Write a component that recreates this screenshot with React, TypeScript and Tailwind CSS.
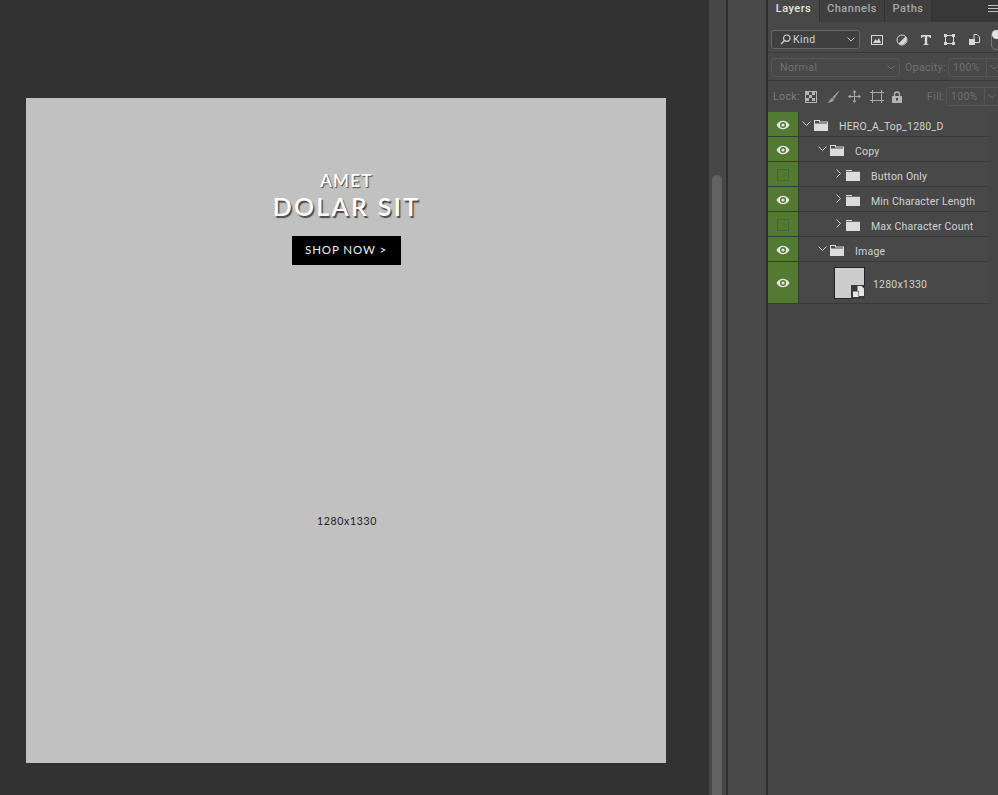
import React from "react";

const Eye = () => (
  <svg width="14" height="10" viewBox="0 0 14 10" className="block">
    <path d="M0.5 5C2.2 2 4.4 0.8 7 0.8S11.8 2 13.5 5C11.8 8 9.6 9.2 7 9.2S2.2 8 0.5 5Z" fill="#e6e6e6" />
    <circle cx="7" cy="5" r="3" fill="#527a33" />
    <circle cx="7" cy="5" r="1.6" fill="#e6e6e6" />
  </svg>
);

const Folder = ({ open }: { open: boolean }) => (
  <svg width="14" height="11" viewBox="0 0 14 11" className="block shrink-0 translate-y-[1px]">
    {open ? (
      <path d="M0 0H6V1.5H14V11H0ZM1 1V3.5H13V2.5H5V1Z" fill="#dcdcdc" fillRule="evenodd" />
    ) : (
      <path d="M0 0H6V1H0ZM0 1.8H14V11H0Z" fill="#dcdcdc" />
    )}
  </svg>
);

const Chevron = ({ open }: { open: boolean }) => (
  <svg width="9" height="9" viewBox="0 0 9 9" className="block shrink-0 -translate-y-[1px]">
    <path d={open ? "M0.5 2.5L4.5 6.5L8.5 2.5" : "M2.5 0.5L6.5 4.5L2.5 8.5"} stroke="#d0d0d0" strokeWidth="1" fill="none" />
  </svg>
);

const SmallDown = ({ color = "#bdbdbd" }: { color?: string }) => (
  <svg width="8" height="5" viewBox="0 0 8 5" className="block shrink-0">
    <path d="M0.5 0.5L4 4L7.5 0.5" stroke={color} strokeWidth="1" fill="none" />
  </svg>
);

type RowProps = { vis: boolean; children: React.ReactNode; tall?: boolean };

const Row = ({ vis, children, tall }: RowProps) => (
  <div className={tall ? "flex w-[221px] h-[42px] border-b border-[#393939]" : "flex w-[221px] h-[25px] border-b border-[#393939]"}>
    <div className={tall ? "w-[31px] shrink-0 bg-[#527a33] border-r border-[#3b3b3b] flex items-center justify-center pr-[1px]" : "w-[31px] shrink-0 bg-[#527a33] border-r border-[#3b3b3b] flex items-center justify-center pr-[1px] pt-[2px]"}>
      {vis ? <Eye /> : <div className="w-[12px] h-[12px] border border-[#47682c]" />}
    </div>
    <div className="w-[190px] shrink-0 flex items-center bg-[#484848]">{children}</div>
  </div>
);

const Layer = ({ pad, open, name }: { pad: string; open: boolean; name: string }) => (
  <div className={`flex items-center ${pad}`}>
    <Chevron open={open} />
    <div className="w-[3px] shrink-0" />
    <Folder open={open} />
    <span className="ml-[11px] whitespace-nowrap text-[10.5px] tracking-[0.2px] text-[#d2d2d2] translate-y-[3px]">{name}</span>
  </div>
);

export default function App() {
  return (
    <div className="flex w-[998px] h-[795px] overflow-hidden bg-[#323232] font-['Roboto','Liberation_Sans',sans-serif]">
      <div className="w-[709px] shrink-0 pl-[26px] pt-[98px]">
        <div className="w-[640px] h-[665px] bg-[#c1c1c1] flex flex-col items-center pt-[73px] font-['Lato','Liberation_Sans',sans-serif]">
          <div className="h-[19px] leading-[19px] ml-[1px] text-[17px] font-semibold tracking-[1.3px] text-white [text-shadow:1px_1px_1px_#4a4a4a]">AMET</div>
          <div className="h-[33px] leading-[33px] ml-[1px] text-[25px] font-semibold tracking-[2.3px] text-white [text-shadow:1.5px_1.5px_1px_#4a4a4a] whitespace-nowrap">DOLAR SIT</div>
          <div className="mt-[13px] w-[109px] h-[29px] pb-[1px] bg-black flex items-center justify-center text-[11.5px] tracking-[0.9px] text-[#f0f0f0] whitespace-nowrap">SHOP NOW &gt;</div>
          <div className="mt-[249px] ml-[2px] text-[10.5px] tracking-[0.7px] text-[#222222]">1280x1330</div>
        </div>
      </div>

      <div className="w-[17px] shrink-0 bg-[#474747] flex flex-col pl-[3px] pt-[175px]">
        <div className="w-[10px] flex-1 rounded-t-[5px] bg-[#626262]" />
      </div>
      <div className="w-[2px] shrink-0 bg-[#2e2e2e]" />
      <div className="w-[38px] shrink-0 bg-[#494949]" />
      <div className="w-[2px] shrink-0 bg-[#2e2e2e]" />

      <div className="w-[230px] shrink-0 bg-[#454545] flex flex-col overflow-hidden text-[10.5px]">
        <div className="flex h-[22px] shrink-0 bg-[#383838]">
          <div className="w-[52px] h-[22px] bg-[#484848] border-r border-[#333333] flex justify-center pt-[1px] text-[11px] font-medium tracking-[0.5px] text-[#e4e4e4]">Layers</div>
          <div className="w-[65px] border-r border-[#333333] bg-[#3f3f3f] flex justify-center pt-[1px] text-[11px] font-medium tracking-[0.5px] text-[#a8a8a8]">Channels</div>
          <div className="w-[47px] border-r border-[#333333] bg-[#3f3f3f] flex justify-center pt-[1px] text-[11px] font-medium tracking-[0.5px] text-[#a8a8a8]">Paths</div>
          <div className="flex-1 flex justify-end pt-[5px]">
            <div className="w-[10px] h-[7px] border-y border-[#c0c0c0] flex items-center">
              <div className="w-full h-px bg-[#c0c0c0]" />
            </div>
          </div>
        </div>

        <div className="h-[31px] shrink-0 border-b border-[#393939] flex items-center pl-[3px] pt-[5px] bg-[#484848]">
          <div className="w-[89px] h-[19px] shrink-0 rounded-[3px] border border-[#666666] bg-[#3f3f3f] flex items-center pl-[8px] pr-[4px] text-[#d0d0d0]">
            <svg width="11" height="11" viewBox="0 0 11 11" className="block shrink-0">
              <circle cx="6.8" cy="4.2" r="3.2" stroke="#d0d0d0" strokeWidth="1.2" fill="none" />
              <path d="M4.5 6.5L1 10" stroke="#d0d0d0" strokeWidth="1.5" />
            </svg>
            <span className="ml-[2px] flex-1 tracking-[0.4px]">Kind</span>
            <SmallDown color="#cfcfcf" />
          </div>
          <svg width="12" height="10" viewBox="0 0 12 10" className="block shrink-0 ml-[11px]">
            <rect x="0.5" y="0.5" width="11" height="9" fill="none" stroke="#d6d6d6" />
            <path d="M2 8L4.5 4L6 6L8 3L10 8Z" fill="#d6d6d6" />
          </svg>
          <svg width="12" height="12" viewBox="0 0 12 12" className="block shrink-0 ml-[13px]">
            <circle cx="6" cy="6" r="5" fill="none" stroke="#d6d6d6" />
            <path d="M9.5 2.5A5 5 0 0 1 2.5 9.5Z" fill="#d6d6d6" />
          </svg>
          <svg width="10" height="10" viewBox="0 0 10 10" className="block shrink-0 ml-[13px]">
            <path d="M0 0H10V3H9C8.8 2 8 1.5 6.2 1.5V8.8L7.5 9.2V10H2.5V9.2L3.8 8.8V1.5C2 1.5 1.2 2 1 3H0Z" fill="#d6d6d6" />
          </svg>
          <svg width="11" height="11" viewBox="0 0 11 11" className="block shrink-0 ml-[13px]">
            <rect x="1.5" y="1.5" width="8" height="8" fill="none" stroke="#d6d6d6" />
            <rect x="0" y="0" width="3" height="3" fill="#d6d6d6" />
            <rect x="8" y="0" width="3" height="3" fill="#d6d6d6" />
            <rect x="0" y="8" width="3" height="3" fill="#d6d6d6" />
            <rect x="8" y="8" width="3" height="3" fill="#d6d6d6" />
          </svg>
          <svg width="11" height="11" viewBox="0 0 11 11" className="block shrink-0 ml-[14px]">
            <path d="M5 0.5H8L10.5 3V8.5H5Z" fill="none" stroke="#d6d6d6" />
            <rect x="0" y="5" width="6" height="6" fill="#d6d6d6" />
          </svg>
          <div className="relative shrink-0 ml-[11px] w-[12px] h-[20px] rounded-l-[5px] border border-[#777777]">
            <div className="absolute left-[0px] top-[-1px] w-[9px] h-[9px] rounded-full bg-[#e4e4e4]" />
          </div>
        </div>

        <div className="h-[28px] shrink-0 border-b border-[#393939] flex items-center pl-[3px] pt-[2px] bg-[#484848]">
          <div className="w-[129px] h-[19px] shrink-0 rounded-[3px] border border-[#555555] flex items-center pl-[8px] pr-[4px] text-[#707070]">
            <span className="flex-1 tracking-[0.5px]">Normal</span>
            <SmallDown color="#6c6c6c" />
          </div>
          <span className="w-[47px] shrink-0 pl-[5px] text-[#707070] tracking-[0.4px]">Opacity:</span>
          <div className="w-[60px] h-[19px] shrink-0 ml-[1px] rounded-l-[3px] border border-[#555555] flex items-center pl-[4px] text-[#707070] tracking-[0.3px]">
            <span className="w-[33px] shrink-0">100%</span>
            <div className="h-full border-l border-[#555555] pl-[3px] flex items-center"><SmallDown color="#6c6c6c" /></div>
          </div>
        </div>

        <div className="h-[31px] shrink-0 flex items-center pl-[5px] bg-[#484848]">
          <span className="w-[31px] shrink-0 text-[#7d7d7d] tracking-[0.4px]">Lock:</span>
          <svg width="12" height="12" viewBox="0 0 12 12" className="block shrink-0 ml-[1px]">
            <rect x="0.5" y="0.5" width="11" height="11" fill="none" stroke="#b4b4b4" />
            <path d="M1 1H4V4H1ZM7 1H10V4H7ZM4 4H7V7H4ZM1 7H4V10H1ZM7 7H10V10H7Z" fill="#b4b4b4" />
          </svg>
          <svg width="12" height="12" viewBox="0 0 12 12" className="block shrink-0 ml-[10px]">
            <path d="M11.5 0.5L6 6.5L7 7.5Z" fill="#9e9e9e" stroke="#9e9e9e" />
            <path d="M5 7L7 8.5C6.5 10.5 3 11.8 0.5 11.8C2.5 10.5 2.8 8 5 7Z" fill="#9e9e9e" />
          </svg>
          <svg width="13" height="13" viewBox="0 0 13 13" className="block shrink-0 ml-[9px]">
            <path d="M6.5 1V12M1 6.5H12" stroke="#a8a8a8" />
            <path d="M6.5 0L8.5 2.5H4.5ZM6.5 13L8.5 10.5H4.5ZM0 6.5L2.5 4.5V8.5ZM13 6.5L10.5 4.5V8.5Z" fill="#a8a8a8" />
          </svg>
          <svg width="14" height="13" viewBox="0 0 14 13" className="block shrink-0 ml-[9px]">
            <rect x="2.5" y="2.5" width="9" height="8" fill="none" stroke="#a8a8a8" />
            <path d="M0 2.5H4M2.5 0V4M10 10.5H14M11.5 8V13M10 2.5H14M11.5 0V4M0 10.5H4M2.5 8V13" stroke="#a8a8a8" />
          </svg>
          <svg width="10" height="12" viewBox="0 0 10 12" className="block shrink-0 ml-[8px]">
            <path d="M2.5 5V3.5A2.5 2.5 0 0 1 7.5 3.5V5" fill="none" stroke="#b4b4b4" strokeWidth="1.3" />
            <rect x="0" y="5" width="10" height="7" rx="0.5" fill="#b4b4b4" />
            <rect x="4" y="7" width="2" height="2.5" fill="#484848" />
          </svg>
          <span className="w-[44px] shrink-0 pl-[25px] text-[#707070] tracking-[0.4px]">Fill:</span>
          <div className="w-[60px] h-[19px] shrink-0 rounded-l-[3px] border border-[#555555] flex items-center pl-[4px] text-[#707070] tracking-[0.3px]">
            <span className="w-[33px] shrink-0">100%</span>
            <div className="h-full border-l border-[#555555] pl-[3px] flex items-center"><SmallDown color="#6c6c6c" /></div>
          </div>
        </div>

        <div className="flex flex-col">
          <Row vis><Layer pad="pl-[3px]" open name="HERO_A_Top_1280_D" /></Row>
          <Row vis><Layer pad="pl-[19px]" open name="Copy" /></Row>
          <Row vis={false}><Layer pad="pl-[35px]" open={false} name="Button Only" /></Row>
          <Row vis><Layer pad="pl-[35px]" open={false} name="Min Character Length" /></Row>
          <Row vis={false}><Layer pad="pl-[35px]" open={false} name="Max Character Count" /></Row>
          <Row vis><Layer pad="pl-[19px]" open name="Image" /></Row>
          <Row vis tall>
            <div className="relative ml-[35px] w-[31px] h-[32px] bg-[#cdcdcd] border border-[#222222]">
              <div className="absolute right-[-1px] bottom-[-1px] w-[14px] h-[14px] bg-[#3a3a3a] flex items-center justify-center">
                <svg width="11" height="11" viewBox="0 0 11 11" className="block">
                  <path d="M4.5 0H8.5L11 2.5V10H6V5H4.5Z" fill="#e6e6e6" />
                  <rect x="0" y="5.5" width="5.5" height="5.5" fill="#e6e6e6" />
                </svg>
              </div>
            </div>
            <span className="ml-[8px] text-[10.5px] tracking-[0.2px] text-[#d2d2d2] translate-y-[2px]">1280x1330</span>
          </Row>
        </div>
      </div>
    </div>
  );
}
